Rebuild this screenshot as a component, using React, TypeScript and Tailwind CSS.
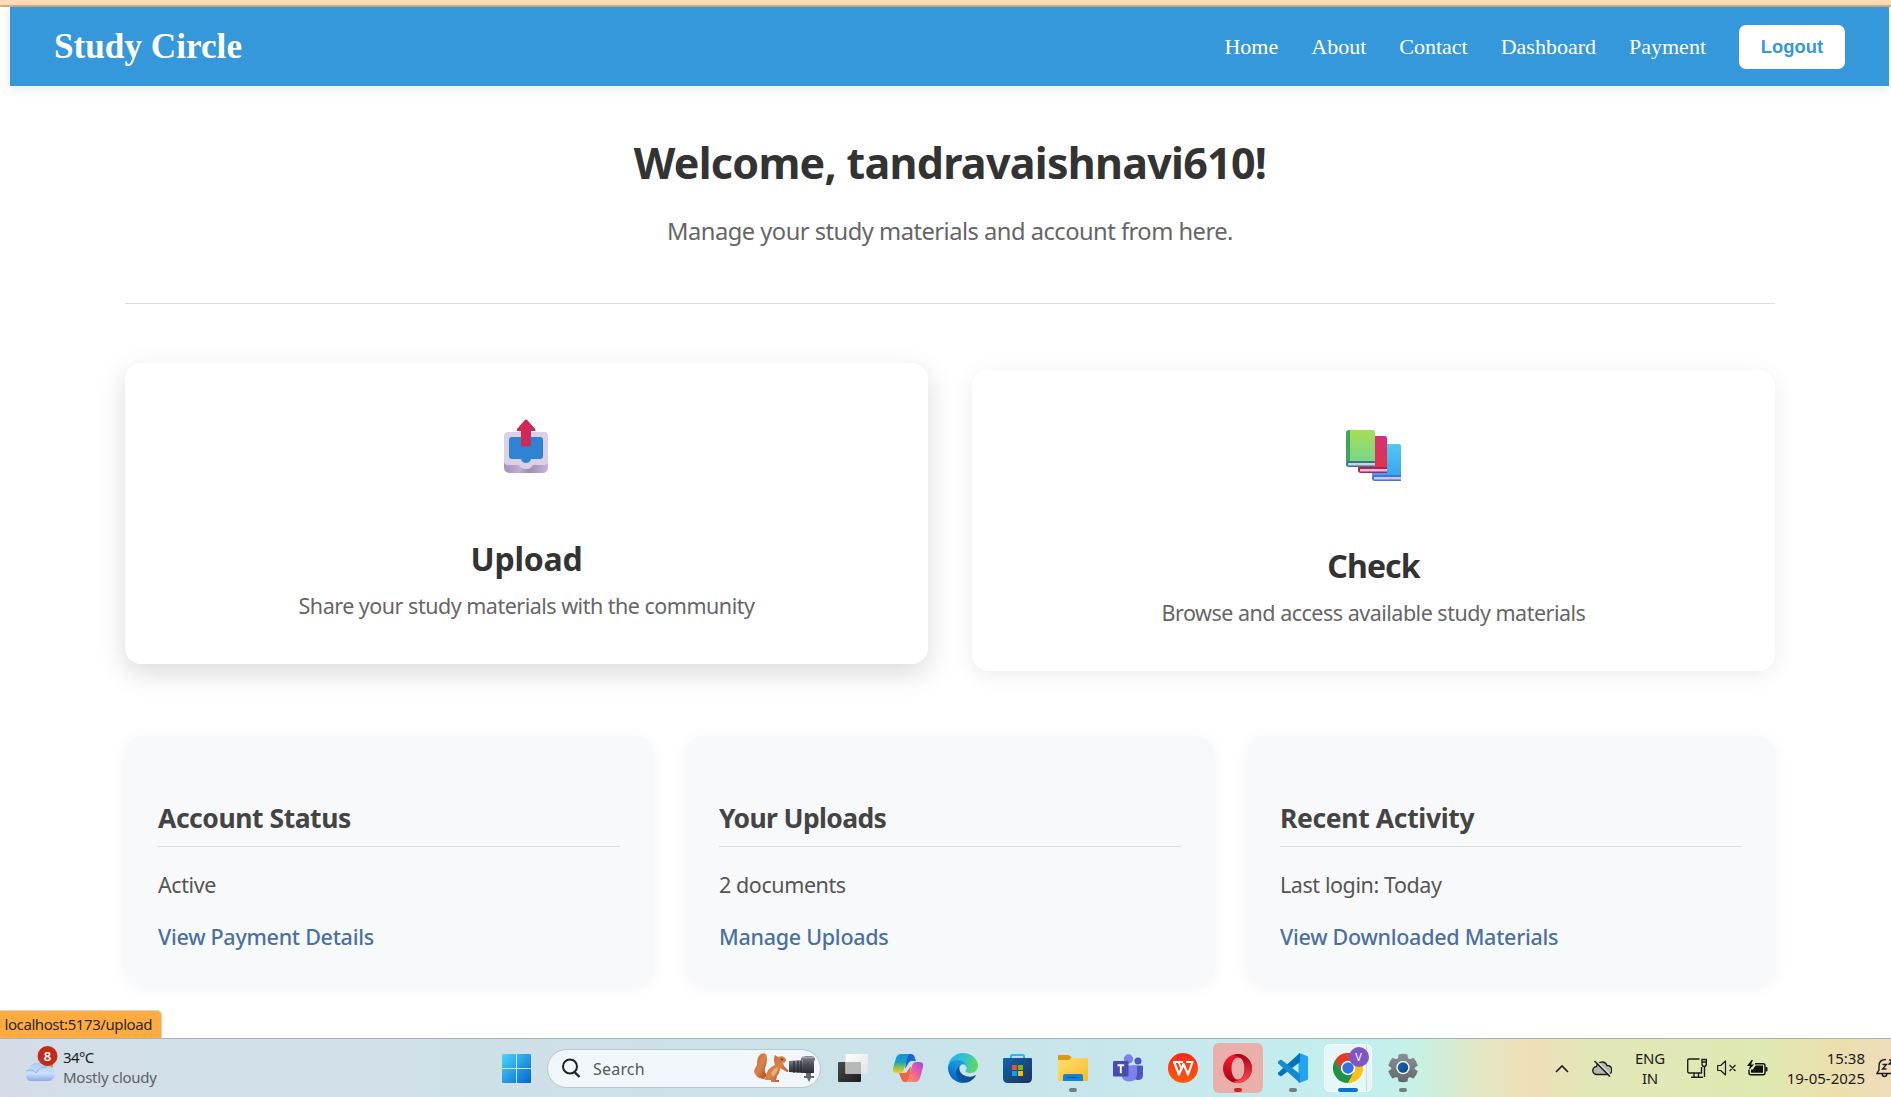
import type { ReactNode } from "react";

const navLinks = ["Home", "About", "Contact", "Dashboard", "Payment"];

const stats = [
  { title: "Account Status", value: "Active", link: "View Payment Details", heading: "tracking-[-0.45px]" },
  { title: "Your Uploads", value: "2 documents", link: "Manage Uploads", heading: "tracking-[-0.65px]" },
  { title: "Recent Activity", value: "Last login: Today", link: "View Downloaded Materials", heading: "tracking-[-0.35px]" },
];

function UploadIcon() {
  return (
    <svg className="-ml-[2px]" width="64" height="64" viewBox="0 0 64 64">
      <defs>
        <linearGradient id="tray" x1="0" x2="1">
          <stop offset="0" stopColor="#a592c0" />
          <stop offset=".35" stopColor="#c2acd8" />
          <stop offset=".55" stopColor="#9c8fae" />
          <stop offset="1" stopColor="#c9afe3" />
        </linearGradient>
        <linearGradient id="arrowUp" x1="0" x2="1">
          <stop offset="0" stopColor="#e0263f" />
          <stop offset="1" stopColor="#bf2c70" />
        </linearGradient>
      </defs>
      <path d="M10 27h44v29q0 6-6 6H16q-6 0-6-6z" fill="url(#tray)" />
      <path d="M14 21h36q4 0 4 4v25q0 4-4 4H39q-2 4-7 4t-7-4H14q-4 0-4-4V25q0-4 4-4z" fill="#dad2e4" />
      <path d="M18 26h28q3 0 3 3v16q0 3-3 3h-9q-1 4-5 4t-5-4h-9q-3 0-3-3V29q0-3 3-3z" fill="#2e83d3" />
      <path d="M30.800 9q1.200-1.100 2.400 0l8 9q1 2-1 2H37v14q0 1.500-1.500 1.500h-7Q27 35.500 27 34V20h-3q-2 0-1-2z" fill="url(#arrowUp)" />
    </svg>
  );
}

function BooksIcon() {
  return (
    <svg className="-ml-[2px]" width="64" height="64" viewBox="0 -2 64 64">
      <defs>
        <linearGradient id="bookGreen" x2="0" y2="1">
          <stop offset="0" stopColor="#a5e052" />
          <stop offset="1" stopColor="#70d596" />
        </linearGradient>
        <linearGradient id="bookRed" x2="0" y2="1">
          <stop offset="0" stopColor="#d92d78" />
          <stop offset="1" stopColor="#e33345" />
        </linearGradient>
        <linearGradient id="bookBlue" x2="0" y2="1">
          <stop offset="0" stopColor="#50c8f2" />
          <stop offset="1" stopColor="#35a2ef" />
        </linearGradient>
      </defs>
      <path d="M31 27q0-3 3-3h24q2 0 2 2v34H34q-3 0-3-3z" fill="url(#bookBlue)" />
      <path d="M60 55H34q-3 0-3 3t3 3h26z" fill="#3d78d5" />
      <path d="M33 57h27v2.500H33z" fill="#d4c3eb" />
      <path d="M17 19q0-3 3-3h24q2 0 2 2v34H20q-3 0-3-3z" fill="url(#bookRed)" />
      <path d="M46 47H20q-3 0-3 3t3 3h26z" fill="#bb1c54" />
      <path d="M19 49h27v2.500H19z" fill="#dcc1e2" />
      <path d="M5 13q0-3 3-3h24q2 0 2 2v34H8q-3 0-3-3z" fill="url(#bookGreen)" />
      <path d="M5 13q0-3 4-3v32H5z" fill="#3da65c" />
      <path d="M34 41H8q-3 0-3 3t3 3h26z" fill="#2f7d78" />
      <path d="M7 43h27v2.500H7z" fill="#d8c9e9" />
    </svg>
  );
}

function ActionCard({ icon, title, text, lifted }: { icon: ReactNode; title: ReactNode; text: string; lifted?: boolean }) {
  return (
    <section
      className={
        lifted
          ? "flex h-[301px] flex-1 -translate-y-[7px] flex-col items-center rounded-[16px] bg-white pt-12 shadow-[0_9px_28px_rgba(0,0,0,0.15)]"
          : "flex h-[301px] flex-1 flex-col items-center rounded-[16px] bg-white pt-12 shadow-[0_4px_22px_rgba(0,0,0,0.08)]"
      }
    >
      {icon}
      <h2 className="mt-[61px] text-[32px] leading-[45px] font-bold tracking-[-0.2px] text-[#333]">{title}</h2>
      <p className="mt-2 text-[21.500px] leading-[33px] tracking-[-0.5px] text-[#666]">{text}</p>
    </section>
  );
}

function Slot({ children, dot, className = "" }: { children: ReactNode; dot?: string; className?: string }) {
  return (
    <div className={`relative flex h-[50px] w-[55px] shrink-0 items-center justify-center ${className}`}>
      {children}
      {dot && <span className={`absolute bottom-[1px] left-1/2 h-1 -translate-x-1/2 rounded-full ${dot}`} />}
    </div>
  );
}

function WeatherIcon() {
  return (
    <svg className="-mt-1" width="38" height="38" viewBox="0 0 38 38">
      <defs>
        <linearGradient id="cloudFill" x2="0" y2="1">
          <stop offset="0" stopColor="#a9cbfa" />
          <stop offset=".6" stopColor="#cbdffb" />
          <stop offset="1" stopColor="#87a9ea" />
        </linearGradient>
      </defs>
      <circle cx="24" cy="20" r="6" fill="#f28a1c" />
      <path d="M7 36a6.500 6.500 0 0 1-.5-12A8.500 8.500 0 0 1 22 21.500a7.500 7.500 0 1 1 2.500 14.500z" fill="url(#cloudFill)" />
      <path d="M3 26q7-3 10 2 4-7 11-6" fill="none" stroke="#8db1ec" strokeWidth="1" />
      <circle cx="24.500" cy="11" r="10" fill="#c42b1c" />
    </svg>
  );
}

function SearchArt() {
  return (
    <svg width="64" height="32" viewBox="0 0 64 32">
      <defs>
        <linearGradient id="fur" x1="0" x2="1" y2="1">
          <stop offset="0" stopColor="#b9622b" />
          <stop offset=".5" stopColor="#d9854a" />
          <stop offset="1" stopColor="#a54a1e" />
        </linearGradient>
        <linearGradient id="lens" x2="0" y2="1">
          <stop offset="0" stopColor="#85888f" />
          <stop offset=".5" stopColor="#4c4f58" />
          <stop offset="1" stopColor="#2c2d33" />
        </linearGradient>
      </defs>
      <path d="M8 2q6-3 6 5 0 5-2 9-1 4 2 7l-3 4Q2 26 1 19q1-3 3-6 0-9 4-11z" fill="url(#fur)" />
      <path d="M22 3l3 2q6-2 8 2 1 3-3 4l1 3 5 5-2 1-7-4q0 5-3 8l-1 4h3v2h-8v-2h-5q-3-1 0-3 0-8 9-12-2-6 0-10z" fill="url(#fur)" />
      <path d="M18 21q2-4 7-6 0 5-5 10z" fill="#ecac78" />
      <circle cx="29" cy="7.500" r=".9" fill="#2d1a12" />
      <path d="M36 9l15-1v13l-15-1z" fill="url(#lens)" />
      <path d="M41 9v12M45 8.500v12M48 8.500v12" stroke="#23242a" strokeWidth="1" />
      <path d="M48 6l4-2h7l3 2v2l-1 1v12H50V8h-2z" fill="url(#lens)" />
      <path d="M49 5.500h12" stroke="#a3a6ad" strokeWidth="1.500" />
      <path d="M53 21h5v3h3v2h-3l-2 4-2-4h-3v-2h2z" fill="#65686f" />
    </svg>
  );
}

function StartIcon() {
  return (
    <svg width="29" height="29" viewBox="0 0 29 29">
      <defs>
        <linearGradient id="win" x2="1" y2="1">
          <stop offset="0" stopColor="#4cd3fc" />
          <stop offset="1" stopColor="#0067cf" />
        </linearGradient>
      </defs>
      <path d="M1 0h13v14H0V1q0-1 1-1zM15 0h13q1 0 1 1v13H15zM0 15h14v14H1q-1 0-1-1zM15 15h14v13q0 1-1 1H15z" fill="url(#win)" />
    </svg>
  );
}

function TaskViewIcon() {
  return (
    <svg width="30" height="30" viewBox="0 0 30 30">
      <defs>
        <linearGradient id="tvDark" x2="1" y2="1">
          <stop offset="0" stopColor="#4a4a4a" />
          <stop offset="1" stopColor="#1d1d1d" />
        </linearGradient>
        <linearGradient id="tvLight" x2="1" y2="1">
          <stop offset="0" stopColor="#fdfdfd" />
          <stop offset="1" stopColor="#e0e2e3" />
        </linearGradient>
      </defs>
      <rect y="9" width="23" height="20" rx="1" fill="url(#tvDark)" />
      <rect x="7.500" y="1" width="22.500" height="20" rx="1" fill="url(#tvLight)" />
      <path d="M7.500 9H23v12H8.500q-1 0-1-1z" fill="#b8b8b8" />
    </svg>
  );
}

function CopilotIcon() {
  return (
    <svg width="30" height="28" viewBox="0 0 30 28">
      <defs>
        <linearGradient id="cpA" x2="0" y2="1">
          <stop offset="0" stopColor="#128ee6" />
          <stop offset=".45" stopColor="#1fa5b8" />
          <stop offset=".7" stopColor="#8fc04a" />
          <stop offset="1" stopColor="#f2cf24" />
        </linearGradient>
        <linearGradient id="cpB" x1="1" x2="0" y2="1">
          <stop offset="0" stopColor="#a446e8" />
          <stop offset=".5" stopColor="#f0609a" />
          <stop offset="1" stopColor="#fb9a58" />
        </linearGradient>
        <linearGradient id="cpC" x2="1" y2="1">
          <stop offset="0" stopColor="#1b48c8" />
          <stop offset="1" stopColor="#1690df" />
        </linearGradient>
      </defs>
      <path d="M14 0h4q3 0 4 4l1 3h-4q-3 0-4 3l-3 5z" fill="url(#cpC)" />
      <path d="M16 28h-4q-3 0-4-4l-2-5h5q3 0 4-3l3-4z" fill="#ef6340" />
      <path d="M8 0h9q-2 1-3 5l-3 10q-1 4-4 4H4q-5 0-4-5L3 4q1.500-4 5-4z" fill="url(#cpA)" />
      <path d="M22 28h-9q2-1 3-5l3-11q1-4 4-4h3q5 0 4 5l-3 11q-1.500 4-5 4z" fill="url(#cpB)" />
    </svg>
  );
}

function EdgeIcon() {
  return (
    <svg width="30" height="30" viewBox="0 0 256 256">
      <defs>
        <linearGradient id="edA" x1="60" y1="177" x2="241" y2="177" gradientUnits="userSpaceOnUse">
          <stop offset="0" stopColor="#0c59a4" />
          <stop offset="1" stopColor="#114a8b" />
        </linearGradient>
        <linearGradient id="edB" x1="150" y1="100" x2="45" y2="230" gradientUnits="userSpaceOnUse">
          <stop offset="0" stopColor="#1b9de2" />
          <stop offset=".3" stopColor="#1595df" />
          <stop offset="1" stopColor="#0067c8" />
        </linearGradient>
        <linearGradient id="edC" x1="20" y1="60" x2="250" y2="120" gradientUnits="userSpaceOnUse">
          <stop offset="0" stopColor="#2bb0e8" />
          <stop offset=".5" stopColor="#32c3cd" />
          <stop offset="1" stopColor="#65da52" />
        </linearGradient>
      </defs>
      <path d="M231 190.500c-3.400 1.800-6.900 3.400-10.500 4.700a101.700 101.700 0 0 1-35.900 6.500c-47.300 0-88.500-32.500-88.500-74.300a31.500 31.500 0 0 1 16.400-27.300c-42.800 1.800-53.800 46.400-53.800 72.500 0 73.900 68.100 81.400 82.800 81.400 7.900 0 19.800-2.300 27-4.600l1.300-.4a128.300 128.300 0 0 0 66.600-52.800 4 4 0 0 0-5.400-5.700z" fill="url(#edA)" />
      <path d="M105.700 241.400a79.200 79.200 0 0 1-22.700-21.300A80.700 80.700 0 0 1 112.500 100c3.200-1.500 8.500-4.100 15.600-4a32.400 32.400 0 0 1 25.700 13 31.900 31.900 0 0 1 6.300 18.700c0-.2 24.500-79.600-80-79.600C36.200 48.100.1 89.800.1 126.300A130.200 130.200 0 0 0 12.200 182a128 128 0 0 0 156.400 67.100 75.500 75.500 0 0 1-62.800-7.700z" fill="url(#edB)" />
      <path d="M152.300 148.900c-.8 1-3.300 2.500-3.300 5.700 0 2.600 1.700 5.200 4.800 7.300 14.400 10.100 41.700 8.700 41.700 8.700a59.600 59.600 0 0 0 30.300-8.300A61.400 61.400 0 0 0 256 109.200c.3-22.300-8-37.200-11.300-43.800C223.500 23.900 177.700 0 128 0A128 128 0 0 0 0 126.200C.5 89.700 36.800 60.200 80 60.200c3.500 0 23.500.3 42 10.100 16.300 8.500 24.800 18.900 30.800 29.200 6.200 10.700 7.300 24.200 7.300 29.500s-2.700 13.300-7.800 19.900z" fill="url(#edC)" />
    </svg>
  );
}

function StoreIcon() {
  return (
    <svg width="29" height="30" viewBox="0 0 29 30">
      <defs>
        <linearGradient id="bag" x2="1" y2="1">
          <stop offset="0" stopColor="#0f65ad" />
          <stop offset="1" stopColor="#1c335e" />
        </linearGradient>
      </defs>
      <path d="M8 8V3.500Q8 2 9.500 2h10Q21 2 21 3.500V8" fill="none" stroke="#25bdeb" strokeWidth="2.200" />
      <path d="M1 5h27q1 0 1 1v19q0 5-5 5H5q-5 0-5-5V6q0-1 1-1z" fill="url(#bag)" />
      <path d="M9 5V3.500h11V5" fill="#bcdcec" />
      <path d="M9 12h5v5H9z" fill="#f25022" />
      <path d="M15 12h5v5h-5z" fill="#7fba00" />
      <path d="M9 18h5v5H9z" fill="#00a4ef" />
      <path d="M15 18h5v5h-5z" fill="#ffb900" />
    </svg>
  );
}

function FolderIcon() {
  return (
    <svg width="30" height="28" viewBox="0 0 30 28">
      <defs>
        <linearGradient id="folder" x2="1" y2="1">
          <stop offset="0" stopColor="#ffdf73" />
          <stop offset="1" stopColor="#fcba24" />
        </linearGradient>
      </defs>
      <path d="M1 1h9q1 0 2 1l2 2h14v8H0V2q0-1 1-1z" fill="#d99a0b" />
      <path d="M11 6l2-2h16q1 0 1 1v21q0 1-1 1H1q-1 0-1-1V6z" fill="url(#folder)" />
      <path d="M5 27v-5q0-2 2-2h16q2 0 2 2v5z" fill="#1182d4" />
      <path d="M8.500 23.500h13" stroke="#085a9e" />
    </svg>
  );
}

function TeamsIcon() {
  return (
    <svg width="30" height="28" viewBox="0 0 30 28">
      <circle cx="25" cy="7" r="3.500" fill="#4e56be" />
      <circle cx="15.500" cy="5" r="4.700" fill="#7b83eb" />
      <path d="M19 11.500h10q1 0 1 1V21q0 5-5 5-4 0-6-4z" fill="#4e56be" />
      <path d="M9 11.500h14q1 0 1 1v7q0 8-8 8-7 0-8-8z" fill="#7b83eb" />
      <rect y="7" width="15.500" height="15.500" rx="1" fill="#464dae" />
      <path d="M4.500 11.200h6.600M7.800 11.200v8" stroke="#fff" strokeWidth="1.900" />
    </svg>
  );
}

function WpsIcon() {
  return (
    <svg width="30" height="30" viewBox="0 0 30 30">
      <defs>
        <linearGradient id="wps" x2="0" y2="1">
          <stop offset="0" stopColor="#ff281a" />
          <stop offset="1" stopColor="#ff5a0a" />
        </linearGradient>
      </defs>
      <circle cx="15" cy="15" r="15" fill="url(#wps)" />
      <path d="M15 9H6l5 12.500L15.500 11 20 21.500 24.500 9H18" fill="none" stroke="#fff" strokeWidth="2.200" strokeLinejoin="round" />
      <path d="M10.500 9l3 7" stroke="#fff" strokeWidth="1.800" />
    </svg>
  );
}

function OperaIcon() {
  return (
    <svg width="29" height="29" viewBox="0 0 29 29">
      <defs>
        <linearGradient id="opA" x2="0" y2="1">
          <stop offset="0" stopColor="#ff1b2d" />
          <stop offset="1" stopColor="#a70014" />
        </linearGradient>
        <linearGradient id="opB" x2="0" y2="1">
          <stop offset="0" stopColor="#a30012" />
          <stop offset="1" stopColor="#ff4e54" />
        </linearGradient>
      </defs>
      <path fillRule="evenodd" d="M14.500 0a14.500 14.500 0 1 0 0 29 14.500 14.500 0 1 0 0-29zM15 3.500c4 0 6.500 5 6.500 11s-2.500 11-6.500 11-6.500-5-6.500-11 2.500-11 6.500-11z" fill="url(#opA)" />
      <path d="M11 4.500C18 0 23 5 23 14.500S18 29 11 24.500q6 3 10-1.500 2-3.500 2-8.500t-2-8.500Q17 1.500 11 4.500zM14.500 0a14.500 14.500 0 0 1 0 29q-2.200 0-4-2 11 1 11-12.500T10.500 2q2-2 4-2z" fill="url(#opB)" />
    </svg>
  );
}

function CodeIcon() {
  return (
    <svg width="30" height="30" viewBox="0 0 30 30">
      <path d="M21.500 0L30 3.500v23L21.500 30l-1-1V1z" fill="#24a3ee" />
      <path d="M0 19.700q-.7.800 0 1.600l2 1.700q.8.500 1.600 0L22 9V1q0-1-.8-.6z" fill="#0173b8" />
      <path d="M0 10.300q-.7-.8 0-1.600L2 7q.8-.5 1.600 0L22 21v8q0 1-.8.600z" fill="#138bd2" />
    </svg>
  );
}

function ChromeIcon() {
  return (
    <svg width="30" height="30" viewBox="0 0 30 30">
      <circle cx="15" cy="15" r="15" fill="#fbc116" />
      <path d="M15 15L2 7.500A15 15 0 0 0 15 30l6.100-11.500z" fill="#1e9347" />
      <path d="M15 15L8.900 18.500 2 7.500A15 15 0 0 1 28 7.500z" fill="#e33b2e" />
      <path d="M15 8h13a15 15 0 0 1-13 22l6.500-11.500z" fill="#fbc116" />
      <circle cx="15" cy="15" r="7.200" fill="#fff" />
      <circle cx="15" cy="15" r="5.700" fill="#2f74e6" />
    </svg>
  );
}

function SettingsIcon() {
  return (
    <svg width="30" height="30" viewBox="0 0 30 30">
      <defs>
        <linearGradient id="gear" x2="0" y2="1">
          <stop offset="0" stopColor="#8a9096" />
          <stop offset="1" stopColor="#62676c" />
        </linearGradient>
        <linearGradient id="hub" x2="1" y2="1">
          <stop offset="0" stopColor="#1668b0" />
          <stop offset="1" stopColor="#0c4688" />
        </linearGradient>
      </defs>
      <path
        d="M10.500 1.500Q15 0 19.500 1.500L20 5q1 1.500 3 .8l2.500-1Q28.500 8 29.800 12.500L27 14.500q-1 .9 0 1.800l2.800 2Q28.500 22 25.500 25.500L22.500 24.300Q20.500 23.800 20 25.500l-.5 3Q15 30 10.500 28.500L10 25.500q-.5-1.700-2.500-1.200l-3 1.200Q1.500 22 .2 18.300L3 16.300q1-.9 0-1.800L.2 12.500Q1.500 8 4.500 4.800l2.500 1q2 .7 3-.8z"
        fill="url(#gear)"
      />
      <circle cx="15" cy="14.500" r="6.700" fill="#f1f3f5" />
      <circle cx="15" cy="14.500" r="5.200" fill="url(#hub)" />
    </svg>
  );
}

function CloudOffIcon() {
  return (
    <svg width="20" height="17" viewBox="0 0 20 17">
      <path d="M5 14.500a4 4 0 0 1-.5-8A5.500 5.500 0 0 1 15 5.500a4.500 4.500 0 0 1 .5 9z" fill="#b5b8b2" stroke="#1c1c1c" strokeWidth="1.400" />
      <path d="M4 .5l15 15" stroke="#e2e9bd" strokeWidth="1.500" />
      <path d="M2.500 1l15.500 15.500" stroke="#1c1c1c" strokeWidth="1.500" />
    </svg>
  );
}

function NetworkIcon() {
  return (
    <svg width="20" height="20" viewBox="0 0 20 20" fill="none" stroke="#1c1c1c" strokeWidth="1.400">
      <path d="M12.500 1H2Q.7 1 .7 2.300v11Q.7 15 2 15h12.500V9M7 15v4M11.500 15v4M4 19.200h12M17.500 9v10" />
      <path d="M15 1.500h4.300V6q0 2.500-2.100 2.500T15 6zM15 4h4" />
    </svg>
  );
}

function MutedIcon() {
  return (
    <svg width="20" height="16" viewBox="0 0 20 16" fill="none" stroke="#1c1c1c" strokeWidth="1.200">
      <path d="M.7 5.500h3L8.500 1v14L3.700 10.500h-3zM12.500 5l6 6M18.500 5l-6 6" strokeLinejoin="round" />
    </svg>
  );
}

function BatteryIcon() {
  return (
    <svg width="21" height="17" viewBox="0 0 21 17">
      <path d="M8 3.700h8q2 0 2 2v7q0 2-2 2H4q-2 0-2-2V10" fill="none" stroke="#111" strokeWidth="1.400" />
      <path d="M8.500 5.500H16v7.300H4V9.500h2zM18.500 7h1q1 0 1 1v2.500q0 1-1 1h-1z" fill="#111" />
      <path d="M4.500 0L0 6h3L1.500 10.500 7 4.500H4L6 0z" fill="#111" />
    </svg>
  );
}

function BellIcon() {
  return (
    <svg width="22" height="20" viewBox="0 0 22 20" fill="none" stroke="#1c1c1c" strokeWidth="1.400">
      <path d="M10 1.500Q3 1.500 3 8v4l-2 3.500h17M6 16q.5 2.500 2.500 2.500T11 16" />
      <path d="M6.500 6.500h4l-4 4.500h4M13 2h3.500L13 6h3.500" strokeWidth="1.300" />
    </svg>
  );
}

function Taskbar() {
  return (
    <footer className="flex h-[59px] shrink-0 items-center overflow-hidden border-t border-[#a4b3b8] bg-[linear-gradient(90deg,#d5dbe7_0px,#d2dfe9_90px,#cfdfe8_500px,#cbe2e9_830px,#c7e6ec_1100px,#c3efee_1380px,#c8f0e4_1420px,#e4e6c4_1480px,#f0dfb9_1530px,#e2e7b7_1590px,#dfe9b3_1760px,#ecdfac_1840px,#efdcbd_1891px)] text-[15px]">
      <div className="relative flex w-[502px] shrink-0 pl-[23px]">
        <WeatherIcon />
        <span className="absolute -top-[3px] left-[37.5px] w-5 text-center text-[13px] leading-[20px] font-semibold text-white">8</span>
        <div className="-mt-0.5 ml-[2px] leading-5">
          <p className="tracking-[-0.6px] text-[#1b1b1b]">34°C</p>
          <p className="tracking-[-0.25px] text-[#5d6165]">Mostly cloudy</p>
        </div>
      </div>
      <StartIcon />
      <div className="ml-[16px] flex h-[39px] w-[274px] shrink-0 items-center rounded-full border border-[#b9c8cf] bg-[#f0f6f9] pl-[13px]">
        <svg width="20" height="20" viewBox="0 0 20 20" fill="none" stroke="#222" strokeWidth="2">
          <circle cx="9" cy="8.500" r="7" />
          <path d="M13.500 14l5 5" strokeWidth="2.400" />
        </svg>
        <span className="mt-px ml-3 text-[16px] tracking-[0.2px] text-[#55595c]">Search</span>
        <div className="ml-auto pr-[3px]">
          <SearchArt />
        </div>
      </div>
      <div className="ml-[4px] flex shrink-0">
        <Slot><TaskViewIcon /></Slot>
        <Slot><CopilotIcon /></Slot>
        <Slot><EdgeIcon /></Slot>
        <Slot><StoreIcon /></Slot>
        <Slot dot="w-2 bg-[#71807f]"><FolderIcon /></Slot>
        <Slot><TeamsIcon /></Slot>
        <Slot><WpsIcon /></Slot>
        <Slot dot="w-2 bg-[#c42b1c]">
          <span className="flex size-[50px] items-center justify-center rounded-md bg-[#eaaeab]"><OperaIcon /></span>
        </Slot>
        <Slot dot="w-2 bg-[#71807f]"><CodeIcon /></Slot>
        <Slot dot="w-5 bg-[#0873d2]">
          <span className="relative flex h-[48px] w-[48px] items-center rounded-md border border-white/70 bg-[#e6f7f8] pl-[8px]">
            <span className="absolute inset-y-0 right-[4px] w-px bg-[#c5dfe1]" />
            <ChromeIcon />
            <span className="absolute top-[2px] right-[2px] size-5 rounded-full bg-[#7e57c2] text-center text-[11px] leading-5 text-white">V</span>
          </span>
        </Slot>
        <Slot dot="w-2 bg-[#71807f]"><SettingsIcon /></Slot>
      </div>
      <div className="ml-auto flex shrink-0 items-center text-[#1b1b1b]">
        <svg width="14" height="9" viewBox="0 0 14 9" fill="none" stroke="#1c1c1c" strokeWidth="1.600">
          <path d="M1 8l6-6 6 6" />
        </svg>
        <span className="ml-[23px]"><CloudOffIcon /></span>
        <p className="ml-[20px] w-[36px] text-center leading-5 tracking-[-0.2px]">ENG<br />IN</p>
        <span className="ml-[19px]"><NetworkIcon /></span>
        <span className="ml-[10px]"><MutedIcon /></span>
        <span className="ml-[10px]"><BatteryIcon /></span>
        <p className="ml-[17px] w-[80px] text-right leading-5">15:38<br />19-05-2025</p>
        <span className="-mr-[7px] ml-[11px]"><BellIcon /></span>
      </div>
    </footer>
  );
}

export default function App() {
  return (
    <div className="flex h-[1097px] w-full flex-col overflow-hidden bg-white font-['Noto_Sans','Open_Sans',sans-serif]">
      <div className="h-[7px] shrink-0 border-b-2 border-[#cfae88] bg-[#ffdeb5]" />
      <header className="mr-[2px] ml-[10px] flex h-[79px] shrink-0 items-center justify-between bg-[#3498db] pr-11 pl-11 shadow-[0_2px_11px_rgba(0,0,0,0.1)]">
        <h1 className="font-['Liberation_Serif',serif] text-[35.2px] leading-10 font-bold text-white">Study Circle</h1>
        <nav className="flex items-center gap-[33px] font-['Liberation_Serif',serif] text-[22px] text-white">
          {navLinks.map((label) => (
            <a key={label}>{label}</a>
          ))}
          <button className="h-11 w-[106px] rounded-[7px] bg-white pt-px font-['Liberation_Sans',sans-serif] text-[18.400px] font-bold text-[#3498db]">
            Logout
          </button>
        </nav>
      </header>
      <main className="relative flex-1 px-[125px] pr-[116px]">
        <div className="border-b border-[#ddd] pt-[47px] pb-[54px] text-center">
          <h2 className="text-[43px] leading-[60px] font-bold tracking-[-0.72px] text-[#333]">Welcome, tandravaishnavi610!</h2>
          <p className="mt-[20px] text-[23.700px] leading-9 tracking-[-0.51px] text-[#666]">
            Manage your study materials and account from here.
          </p>
        </div>
        <div className="mt-[66px] flex gap-11">
          <ActionCard lifted icon={<UploadIcon />} title="Upload" text="Share your study materials with the community" />
          <ActionCard
            icon={<BooksIcon />}
            title={<span className="tracking-[-0.9px]">Check</span>}
            text="Browse and access available study materials"
          />
        </div>
        <div className="mt-[66px] grid grid-cols-3 gap-[33px]">
          {stats.map((s) => (
            <section key={s.title} className="h-[248px] rounded-[16px] bg-[#f8f9fb] px-[33px] pt-[62px] shadow-[0_2px_16px_rgba(0,0,0,0.05)]">
              <h3 className={`border-b border-[#ddd] pb-[9px] text-[26.500px] leading-[38px] font-bold text-[#444] ${s.heading}`}>{s.title}</h3>
              <p className="mt-[21px] text-[21.500px] leading-[33px] tracking-[-0.42px] text-[#555]">{s.value}</p>
              <a className="mt-[19px] block text-[21.500px] leading-[33px] font-medium tracking-[-0.27px] text-[#4a6fa5]">{s.link}</a>
            </section>
          ))}
        </div>
        <div className="absolute bottom-0 left-0 h-[28px] w-[162px] rounded-tr-[5px] border-t border-r border-[#d9d4cc] bg-[#ffab40] pl-[4.500px] text-[15px] leading-[27px] tracking-[-0.42px] whitespace-nowrap text-[#2b2b2b]">
          localhost:5173/upload
        </div>
      </main>
      <Taskbar />
    </div>
  );
}
